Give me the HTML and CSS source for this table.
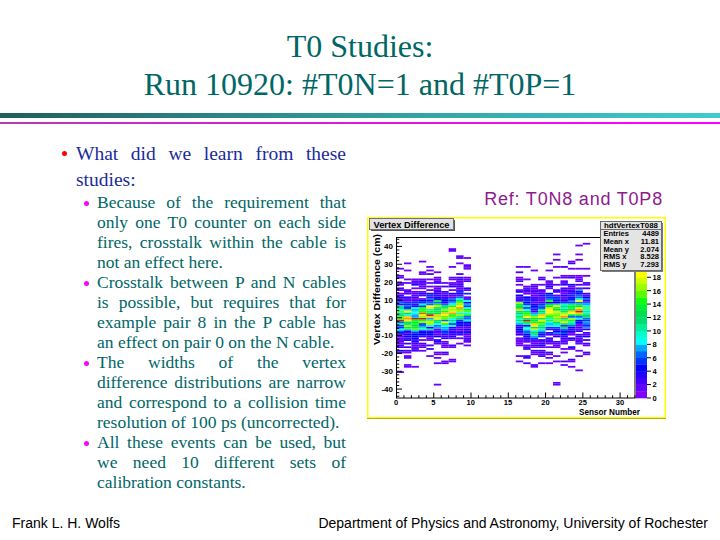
FILE: index.html
```html
<!DOCTYPE html>
<html lang="en">
<head>
<meta charset="utf-8">
<title>T0 Studies</title>
<link rel="stylesheet" href="styles.css">
</head>
<body>
<div class="slide">
  <header class="title">
    <h1>T0 Studies:<br>Run 10920: #T0N=1 and #T0P=1</h1>
  </header>
  <div class="rules"><div class="rule-bar"></div><div class="rule-line"></div></div>

  <div class="content">
    <div class="text">
      <div class="item main-item">
        <div class="marker"><span class="dot"></span></div>
        <div class="body">
          <div class="main-text">
            <span class="ln j">What did we learn from these</span>
            <span class="ln">studies:</span>
          </div>
          <ul class="sub">
            <li class="item sub-item">
              <div class="marker"><span class="dot"></span></div>
              <div class="sub-text">
                <span class="ln j">Because of the requirement that</span>
                <span class="ln j">only one T0 counter on each side</span>
                <span class="ln j">fires, crosstalk within the cable is</span>
                <span class="ln">not an effect here.</span>
              </div>
            </li>
            <li class="item sub-item">
              <div class="marker"><span class="dot"></span></div>
              <div class="sub-text">
                <span class="ln j">Crosstalk between P and N cables</span>
                <span class="ln j">is possible, but requires that for</span>
                <span class="ln j">example pair 8 in the P cable has</span>
                <span class="ln">an effect on pair 0 on the N cable.</span>
              </div>
            </li>
            <li class="item sub-item">
              <div class="marker"><span class="dot"></span></div>
              <div class="sub-text">
                <span class="ln j">The widths of the vertex</span>
                <span class="ln j">difference distributions are narrow</span>
                <span class="ln j">and correspond to a collision time</span>
                <span class="ln">resolution of 100 ps (uncorrected).</span>
              </div>
            </li>
            <li class="item sub-item">
              <div class="marker"><span class="dot"></span></div>
              <div class="sub-text">
                <span class="ln j">All these events can be used, but</span>
                <span class="ln j">we need 10 different sets of</span>
                <span class="ln">calibration constants.</span>
              </div>
            </li>
          </ul>
        </div>
      </div>
    </div>

    <figure class="figure">
      <figcaption class="caption">Ref: T0N8 and T0P8</figcaption>
      <svg class="hist" width="299" height="202" viewBox="0 0 299 202">
        <rect x="0.75" y="0.75" width="297.5" height="200" fill="#ffffff" stroke="#ffff00" stroke-width="1.5"/>
        <line x1="0" y1="201.5" x2="299" y2="201.5" stroke="#b4b400" stroke-width="1"/>
        <g id="cells"></g>
        <rect x="29.5" y="20.5" width="238.5" height="160.5" fill="none" stroke="#000" stroke-width="1"/>
        <g id="palette"></g>
        <path id="ticks" d="" stroke="#000" stroke-width="1" fill="none"/>

        <g class="ax lbl-y">
          <text x="26" y="31.9">40</text>
          <text x="26" y="49.8">30</text>
          <text x="26" y="67.7">20</text>
          <text x="26" y="85.6">10</text>
          <text x="26" y="103.5">0</text>
          <text x="26" y="121.4">-10</text>
          <text x="26" y="139.3">-20</text>
          <text x="26" y="157.2">-30</text>
          <text x="26" y="175.1">-40</text>
        </g>
        <g class="ax lbl-x">
          <text x="29" y="188">0</text>
          <text x="66.3" y="188">5</text>
          <text x="103.7" y="188">10</text>
          <text x="141" y="188">15</text>
          <text x="178.4" y="188">20</text>
          <text x="215.7" y="188">25</text>
          <text x="253" y="188">30</text>
        </g>
        <g class="ax lbl-z">
          <text x="285.5" y="183.8">0</text>
          <text x="285.5" y="170.4">2</text>
          <text x="285.5" y="157">4</text>
          <text x="285.5" y="143.5">6</text>
          <text x="285.5" y="130.1">8</text>
          <text x="285.5" y="116.7">10</text>
          <text x="285.5" y="103.3">12</text>
          <text x="285.5" y="89.9">14</text>
          <text x="285.5" y="76.5">16</text>
          <text x="285.5" y="63">18</text>
        </g>

        <text class="ax title-y" transform="translate(12.5 72.5) rotate(-90)" text-anchor="middle" textLength="111" lengthAdjust="spacingAndGlyphs">Vertex Difference (cm)</text>
        <text class="ax title-x" x="273" y="198" text-anchor="end" textLength="61" lengthAdjust="spacingAndGlyphs">Sensor Number</text>

        <rect x="4" y="3" width="84" height="11" fill="#555555"/>
        <rect x="2.5" y="1.5" width="84" height="11" fill="#e2e2e2" stroke="#707070" stroke-width="1"/>
        <text class="ax title-box" x="44.5" y="10.6" text-anchor="middle" textLength="76" lengthAdjust="spacingAndGlyphs">Vertex Difference</text>

        <rect x="235" y="6" width="61" height="49" fill="#7a7a7a"/>
        <rect x="233.5" y="4.5" width="61" height="49" fill="#e4e4e4" stroke="#6a6a6a" stroke-width="1"/>
        <line x1="233.5" y1="12.5" x2="294.5" y2="12.5" stroke="#6a6a6a" stroke-width="1"/>
        <g class="ax stats">
          <text x="264" y="10.8" text-anchor="middle" textLength="54" lengthAdjust="spacingAndGlyphs">hdtVertexT088</text>
          <text x="236.5" y="19.2">Entries</text>
          <text x="292" y="19.2" text-anchor="end">4489</text>
          <text x="236.5" y="26.9">Mean x</text>
          <text x="292" y="26.9" text-anchor="end">11.81</text>
          <text x="236.5" y="34.6">Mean y</text>
          <text x="292" y="34.6" text-anchor="end">2.074</text>
          <text x="236.5" y="42.3">RMS x</text>
          <text x="292" y="42.3" text-anchor="end">8.528</text>
          <text x="236.5" y="50">RMS y</text>
          <text x="292" y="50" text-anchor="end">7.293</text>
        </g>
      </svg>
    </figure>
  </div>

  <footer class="footer">
    <span>Frank L. H. Wolfs</span>
    <span>Department of Physics and Astronomy, University of Rochester</span>
  </footer>
</div>
<script src="script.js"></script>
</body>
</html>
```

FILE: styles.css
```css
html, body {
  margin: 0;
  padding: 0;
  background: #ffffff;
}

.slide {
  width: 720px;
  height: 540px;
  display: flex;
  flex-direction: column;
  overflow: hidden;
  font-family: "Liberation Serif", "Times New Roman", serif;
}

.title {
  padding-top: 27px;
}

.title h1 {
  margin: 0;
  font-weight: normal;
  font-size: 32px;
  line-height: 38px;
  text-align: center;
  color: #006666;
}

.rules {
  margin-top: 10px;
}

.rule-bar {
  height: 5px;
  background: linear-gradient(to right, #1f5e5c 0%, #2a7f7d 25%, #33a6a6 60%, #3fcccc 100%);
}

.rule-line {
  height: 2px;
  margin-top: 4px;
  background: linear-gradient(to right, #b23ab2 0%, #d81ed8 40%, #ff00ff 100%);
}

.content {
  display: flex;
  gap: 21px;
  padding: 17px 0 0 60px;
}

.text {
  width: 286px;
  flex: none;
}

.item {
  display: flex;
}

.marker {
  flex: none;
}

.dot {
  display: block;
  width: 5px;
  height: 5px;
  border-radius: 50%;
}

.main-item > .marker {
  width: 16px;
}

.main-item > .marker .dot {
  background: #ff0000;
  margin: 9.5px 0 0 2px;
}

.body {
  width: 270px;
}

.main-text {
  font-size: 19.5px;
  line-height: 26px;
  color: #1a2b9c;
}

.sub {
  list-style: none;
  margin: -1px 0 0;
  padding: 0;
}

.sub-item > .marker {
  width: 21px;
}

.sub-item > .marker .dot {
  background: #ff00ff;
  margin: 9px 0 0 8px;
}

.sub-text {
  width: 249px;
  font-size: 17.5px;
  line-height: 20px;
  color: #006666;
}

.ln {
  display: block;
  white-space: nowrap;
}

.ln.j {
  text-align: justify;
  text-align-last: justify;
}

.figure {
  width: 299px;
  flex: none;
  margin: 0;
  padding-top: 48px;
}

.caption {
  font-family: "Liberation Sans", Arial, sans-serif;
  font-size: 18px;
  line-height: 20px;
  letter-spacing: 0.8px;
  color: #8f1a8f;
  text-align: right;
  padding-right: 3px;
  margin: 0 0 8px;
}

.hist {
  display: block;
}

.ax {
  font-family: "Liberation Sans", Arial, sans-serif;
  font-weight: bold;
  font-size: 8px;
  fill: #000000;
}

.lbl-y text {
  text-anchor: end;
}

.lbl-x text {
  text-anchor: middle;
  font-size: 7.5px;
}

.lbl-z text {
  font-size: 7.5px;
}

.title-y {
  font-size: 9px;
}

.title-x {
  font-size: 8.5px;
}

.title-box {
  font-size: 9px;
}

.stats text {
  font-size: 7.5px;
}

.footer {
  margin-top: auto;
  display: flex;
  justify-content: space-between;
  padding: 0 12px 9px;
  font-family: "Liberation Sans", Arial, sans-serif;
  font-size: 14px;
  line-height: 16px;
  color: #000000;
}
```

FILE: script.js
```js
(function () {
  var NS = 'http://www.w3.org/2000/svg';
  var X0 = 29.5, X1 = 268, Y0 = 100.75;
  var XS = (X1 - X0) / 32;
  var YS = 160.5 / 90;
  var ZB = 181, ZS = 161 / 24;
  var PAL = ['#7f00ff', '#6600ff', '#4400ff', '#2200ff', '#0000ff', '#0033ff',
    '#0066ff', '#00aaff', '#00ffff', '#00ffcc', '#00ee99', '#00dd77',
    '#00dd55', '#00ee33', '#11ff11', '#55ff00', '#99ff00', '#ccff00',
    '#ffff00', '#ffee00', '#ffcc00', '#ff9900', '#dd6600', '#aa3300'];

  function rng(a) {
    return function () {
      a |= 0; a = a + 0x6D2B79F5 | 0;
      var t = Math.imul(a ^ a >>> 15, 1 | a);
      t = t + Math.imul(t ^ t >>> 7, 61 | t) ^ t;
      return ((t ^ t >>> 14) >>> 0) / 4294967296;
    };
  }
  var r = rng(10920);
  function gauss() {
    var u = 1 - r(), v = r();
    return Math.sqrt(-2 * Math.log(u)) * Math.cos(2 * Math.PI * v);
  }

  var cfg = {
    0: [205, 1], 1: [230, 0], 2: [215, -2], 3: [245, 1], 4: [250, 2],
    5: [240, 2], 6: [235, 1], 7: [220, 3], 8: [230, 5], 9: [150, 4],
    16: [200, 3], 17: [225, 0], 18: [230, -3], 19: [235, -1], 20: [245, 3],
    21: [235, 1], 22: [240, 0], 23: [225, 2], 24: [230, 6], 25: [160, 3]
  };

  var svgCells = document.getElementById('cells');
  var frag = document.createDocumentFragment();
  Object.keys(cfg).forEach(function (k) {
    var ix = +k, n = cfg[k][0], mu = cfg[k][1];
    var counts = new Array(90).fill(0);
    for (var i = 0; i < n; i++) {
      var y = r() < 0.72 ? mu + 4.5 * gauss() : mu + 12.5 * gauss();
      var iy = Math.floor(y + 45);
      if (iy >= 0 && iy < 90) counts[iy]++;
    }
    for (var j = 0; j < 90; j++) {
      var c = counts[j];
      if (!c) continue;
      var rect = document.createElementNS(NS, 'rect');
      var v = j - 45;
      rect.setAttribute('x', (X0 + ix * XS).toFixed(2));
      rect.setAttribute('y', (Y0 - (v + 1) * YS).toFixed(2));
      rect.setAttribute('width', XS.toFixed(2));
      rect.setAttribute('height', YS.toFixed(2));
      rect.setAttribute('fill', PAL[Math.min(23, c)]);
      frag.appendChild(rect);
    }
  });
  svgCells.appendChild(frag);

  var pal = document.getElementById('palette');
  for (var p = 0; p < 24; p++) {
    var pr = document.createElementNS(NS, 'rect');
    pr.setAttribute('x', '269');
    pr.setAttribute('y', (ZB - (p + 1) * ZS).toFixed(2));
    pr.setAttribute('width', '11');
    pr.setAttribute('height', (ZS + 0.3).toFixed(2));
    pr.setAttribute('fill', PAL[p]);
    pal.appendChild(pr);
  }

  var d = '';
  for (var a = -44; a <= 44; a += 2) {
    var yy = (Y0 - a * YS).toFixed(2);
    d += 'M' + X0 + ' ' + yy + 'h' + (a % 10 === 0 ? 5.5 : 2.75);
  }
  for (var b = 0; b <= 32; b++) {
    var xx = (X0 + b * XS).toFixed(2);
    d += 'M' + xx + ' 181v' + (b % 5 === 0 ? -5.5 : -2.75);
  }
  for (var z = 0; z <= 18; z += 2) {
    d += 'M280 ' + (ZB - z * ZS).toFixed(2) + 'h4';
  }
  document.getElementById('ticks').setAttribute('d', d);
})();
```
